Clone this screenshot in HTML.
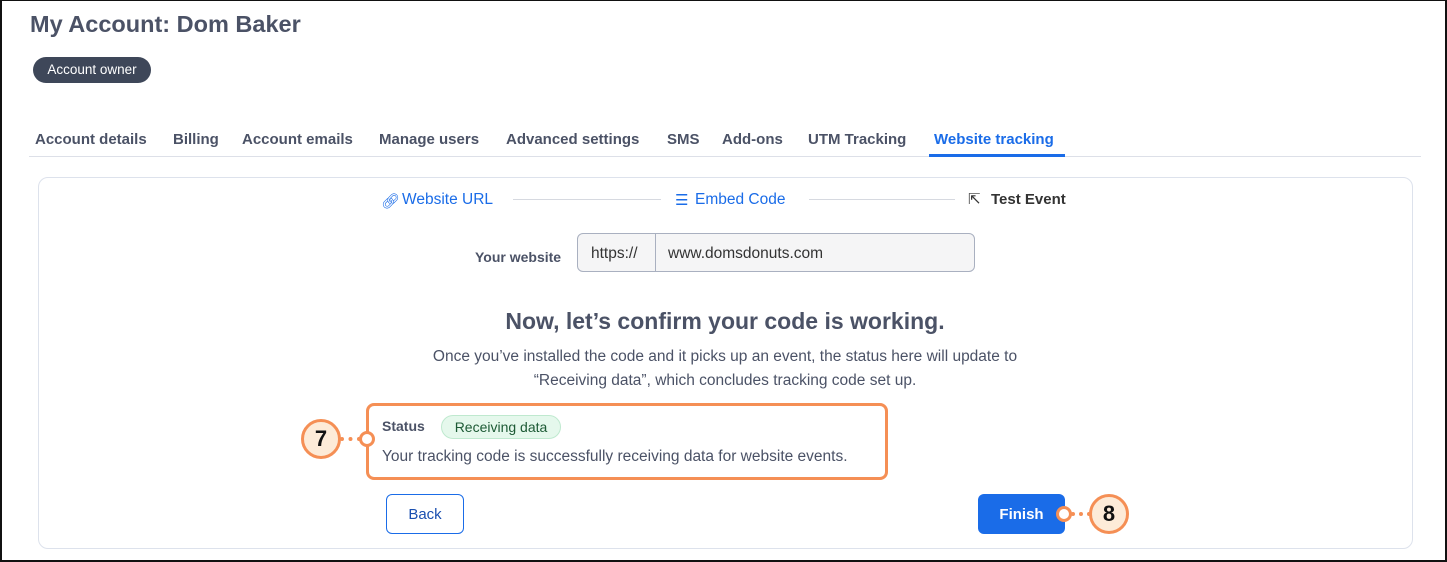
<!DOCTYPE html>
<html><head><style>
*{box-sizing:border-box;margin:0;padding:0}
body{width:1447px;height:562px;background:#fff;font-family:"Liberation Sans",sans-serif;color:#4a5568;position:relative;overflow:hidden}
.frame{position:absolute;left:0;top:0;width:1447px;height:562px;border:2px solid #111;border-top:1px solid #111;border-bottom:2px solid #111}
.a{position:absolute;white-space:nowrap}
.tab{position:absolute;top:131px;font-size:15px;font-weight:bold;color:#4b5266}
.orange{border:3px solid #f58f55}
.dot{position:absolute;width:16px;height:16px;border-radius:50%;border:3px solid #f58f55;background:#fff}
.num{position:absolute;width:40px;height:40px;border-radius:50%;border:3px solid #f58f55;background:#fdebd8;font-size:22px;font-weight:bold;color:#111;text-align:center;line-height:34px}
.dash{position:absolute;height:0;border-top:4px dotted #f58f55}
</style></head><body>
<div class="frame"></div>
<div class="a" style="left:30px;top:11px;font-size:23.5px;font-weight:bold;color:#4b5266">My Account: Dom Baker</div>
<div class="a" style="left:33px;top:57px;width:118px;height:26px;border-radius:13px;background:#3e4759;color:#fff;font-size:13.5px;line-height:26px;text-align:center">Account owner</div>
<div class="tab" style="left:35px">Account details</div>
<div class="tab" style="left:173px">Billing</div>
<div class="tab" style="left:242px">Account emails</div>
<div class="tab" style="left:379px">Manage users</div>
<div class="tab" style="left:506px">Advanced settings</div>
<div class="tab" style="left:667px">SMS</div>
<div class="tab" style="left:722px">Add-ons</div>
<div class="tab" style="left:808px">UTM Tracking</div>
<div class="tab" style="left:934px;color:#1a6ce8">Website tracking</div>
<div class="a" style="left:29px;top:156px;width:1392px;height:1px;background:#dde0e8"></div>
<div class="a" style="left:929px;top:154px;width:136px;height:3px;background:#1a6ce8"></div>
<div class="a" style="left:38px;top:177px;width:1375px;height:372px;border:1px solid #dde2ec;border-radius:10px"></div>
<div class="a" style="left:381px;top:192px;font-size:15px;color:#1a6ce8">&#128279;&#xFE0E;</div>
<div class="a" style="left:402px;top:191px;font-size:15.5px;color:#1a6ce8">Website URL</div>
<div class="a" style="left:513px;top:199px;width:148px;height:1px;background:#d6d9e0"></div>
<div class="a" style="left:675px;top:191px;font-size:15px;color:#1a6ce8">☰</div>
<div class="a" style="left:695px;top:191px;font-size:15.5px;color:#1a6ce8">Embed Code</div>
<div class="a" style="left:809px;top:199px;width:146px;height:1px;background:#d6d9e0"></div>
<div class="a" style="left:968px;top:190px;font-size:15px;color:#333">⇱</div>
<div class="a" style="left:991px;top:191px;font-size:15px;font-weight:bold;color:#333">Test Event</div>
<div class="a" style="left:475px;top:249px;font-size:14px;font-weight:bold;color:#4b5266">Your website</div>
<div class="a" style="left:577px;top:233px;width:398px;height:39px;border:1px solid #a9b0c0;border-radius:6px;background:#f5f5f6"></div>
<div class="a" style="left:655px;top:234px;width:1px;height:37px;background:#a9b0c0"></div>
<div class="a" style="left:591px;top:245px;font-size:15.5px;color:#333">https://</div>
<div class="a" style="left:668px;top:245px;font-size:15.5px;color:#333">www.domsdonuts.com</div>
<div class="a" style="left:0;width:1450px;text-align:center;top:308px;font-size:23px;font-weight:bold;color:#4b5266">Now, let’s confirm your code is working.</div>
<div class="a" style="left:0;width:1450px;text-align:center;top:345px;font-size:15.5px;line-height:24px;color:#4b5266;white-space:normal">Once you’ve installed the code and it picks up an event, the status here will update to<br>“Receiving data”, which concludes tracking code set up.</div>
<div class="a orange" style="left:366px;top:403px;width:522px;height:77px;border-radius:8px"></div>
<div class="a" style="left:382px;top:418px;font-size:14px;font-weight:bold;color:#4b5266">Status</div>
<div class="a" style="left:441px;top:415px;width:120px;height:24px;border-radius:12px;background:#e5f8ec;border:1px solid #bfe9cf;color:#1d5a35;font-size:14px;text-align:center;line-height:22px">Receiving data</div>
<div class="a" style="left:382px;top:448px;font-size:15.5px;color:#4b5266">Your tracking code is successfully receiving data for website events.</div>
<div class="num" style="left:301px;top:419px">7</div>
<div class="dash" style="left:340px;top:437px;width:21px;border-top-width:4px"></div>
<div class="dot" style="left:359px;top:431px"></div>
<div class="a" style="left:386px;top:494px;width:78px;height:40px;border:1px solid #1a6ce8;border-radius:6px;color:#1a4fb0;font-size:15px;text-align:center;line-height:40px">Back</div>
<div class="a" style="left:978px;top:494px;width:87px;height:40px;background:#1a6ce8;border-radius:6px;color:#fff;font-size:15px;font-weight:bold;text-align:center;line-height:41px">Finish</div>
<div class="dot" style="left:1056px;top:506px"></div>
<div class="dash" style="left:1071px;top:512px;width:20px"></div>
<div class="num" style="left:1089px;top:494px">8</div>
</body></html>
